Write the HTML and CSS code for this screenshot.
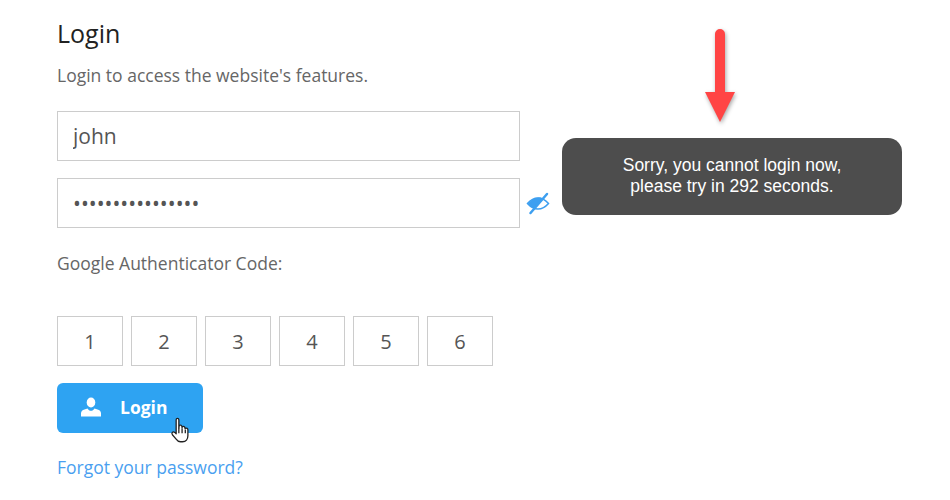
FILE: index.html
```html
<!DOCTYPE html>
<html lang="en">
<head>
  <meta charset="UTF-8">
  <meta name="viewport" content="width=device-width, initial-scale=1.0">
  <title>Login</title>
  <link rel="stylesheet" href="styles.css">
</head>
<body>
  <div class="login-form">
    <h1 class="title">Login</h1>
    <p class="subtitle">Login to access the website's features.</p>

    <input class="field" type="text" value="john">

    <div class="password-row">
      <input class="field" type="password" value="1234567890123456">
      <svg class="eye-icon" viewBox="0 0 24 24" width="24" height="24">
        <path class="eye-outline" d="M1.500 12.500C5 8.500 8.500 7 12 7s7 1.500 10.500 5.500C19 16.500 15.500 18 12 18s-7-1.500-10.500-5.500Z"/>
        <path class="eye-fill" d="M2 12.500C5 8.500 9 6.500 12.500 6.500c2 0 3.500.5 4.500 1L8 17.500C6 16.800 4 15 2 12.500Z"/>
        <path class="eye-slash" d="M21 3 4.500 22"/>
      </svg>
    </div>

    <div class="code-label">Google Authenticator Code:</div>

    <div class="code-row">
      <input class="code-box" type="text" value="1">
      <input class="code-box" type="text" value="2">
      <input class="code-box" type="text" value="3">
      <input class="code-box" type="text" value="4">
      <input class="code-box" type="text" value="5">
      <input class="code-box" type="text" value="6">
    </div>

    <button class="login-btn" type="button">
      <svg class="user-icon" viewBox="0 0 20 20" width="20" height="20">
        <ellipse cx="10" cy="5.500" rx="4.300" ry="5"/>
        <path d="M0 19.500v-3.200c0-2 1.500-3 3.500-3.700l3-1.100c1 1.600 2.100 2.300 3.500 2.300s2.500-.7 3.500-2.300l3 1.100c2 .7 3.500 1.700 3.500 3.700v3.200Z"/>
      </svg>
      <span>Login</span>
    </button>

    <a class="forgot-link" href="#">Forgot your password?</a>
  </div>

  <!-- annotations over the page -->
  <svg class="arrow" viewBox="0 0 50 110" width="50" height="110">
    <path d="M15 9a5 5 0 0 1 10 0v58h10L20 97 5 67h10Z"/>
  </svg>

  <div class="message">Sorry, you cannot login now,<br>please try in 292 seconds.</div>

  <svg class="hand-cursor" viewBox="0 0 20 26" width="22" height="28">
    <path d="M5.500 2.500c0-1.600 2.500-1.600 2.500 0V10l.4-2.200c1.500-.6 2.300 0 2.400 1l.2 1 .3-.8c1.400-.6 2.200 0 2.300 1l.2.800.3-.3c1.300-.4 2.200.2 2.300 1.400v5.500c0 3-1.800 5.600-5 5.600H9.500c-2 0-3-1-4-2.500L2 16.500c-1.300-2 .7-3.400 2.200-2.200l1.300 1.200Z"/>
    <path d="M8 10v5M11 10.500V15M14 11.500V15"/>
  </svg>
</body>
</html>
```

FILE: styles.css
```css
* {
  margin: 0;
  padding: 0;
  box-sizing: border-box;
}

body {
  font-family: "Open Sans", sans-serif;
  background-color: #fff;
  color: #555;
}

.login-form {
  display: flex;
  flex-direction: column;
  align-items: flex-start;
  padding: 17px 0 0 57px;
}

.title {
  font-size: 25px;
  font-weight: 400;
  line-height: 33px;
  color: #222;
}

.subtitle {
  margin-top: 13px;
  font-size: 17.500px;
  line-height: 25px;
  color: #666;
}

.field {
  display: block;
  width: 463px;
  height: 50px;
  padding: 0 15px;
  border: 1px solid #ccc;
  font-family: "Open Sans", sans-serif;
  font-size: 21px;
  color: #555;
  outline: none;
}

.subtitle + .field {
  margin-top: 23px;
}

.password-row {
  display: flex;
  align-items: center;
  margin-top: 17px;
}

.eye-icon {
  margin: 0 0 0 6px;
}

.eye-outline {
  fill: none;
  stroke: #3d9ff0;
  stroke-width: 1.500;
}

.eye-fill {
  fill: #3d9ff0;
}

.eye-slash {
  fill: none;
  stroke: #3d9ff0;
  stroke-width: 2.500;
  stroke-linecap: round;
}

.code-label {
  margin-top: 24px;
  font-size: 17.500px;
  line-height: 23px;
  color: #666;
}

.code-row {
  display: flex;
  gap: 8px;
  margin-top: 41px;
}

.code-box {
  width: 66px;
  height: 50px;
  border: 1px solid #ccc;
  text-align: center;
  font-family: "Open Sans", sans-serif;
  font-size: 20px;
  color: #555;
  outline: none;
}

.login-btn {
  display: flex;
  align-items: center;
  gap: 19px;
  width: 146px;
  height: 50px;
  margin-top: 17px;
  padding: 0 0 2px 24px;
  border: none;
  border-radius: 6px;
  background-color: #2ea3f2;
  color: #fff;
  font-family: "Open Sans", sans-serif;
  font-size: 17.500px;
  font-weight: 700;
}

.user-icon {
  fill: #fff;
}

.forgot-link {
  margin-top: 22px;
  font-size: 17.500px;
  line-height: 24px;
  color: #4a9ff0;
  text-decoration: none;
}

.arrow {
  position: absolute;
  left: 700px;
  top: 25px;
  filter: drop-shadow(1px 2px 2px rgba(0, 0, 0, 0.35));
}

.arrow path {
  fill: #ff4444;
}

.message {
  position: absolute;
  left: 562px;
  top: 138px;
  width: 340px;
  height: 77px;
  padding-top: 17px;
  border-radius: 14px;
  background-color: #4d4d4d;
  color: #fff;
  font-family: "Liberation Sans", Arial, sans-serif;
  font-size: 17.500px;
  line-height: 21px;
  text-align: center;
}

.hand-cursor {
  position: absolute;
  left: 170px;
  top: 417px;
}

.hand-cursor path {
  fill: #fff;
  stroke: #222;
  stroke-width: 1.200;
  stroke-linejoin: round;
}
```
